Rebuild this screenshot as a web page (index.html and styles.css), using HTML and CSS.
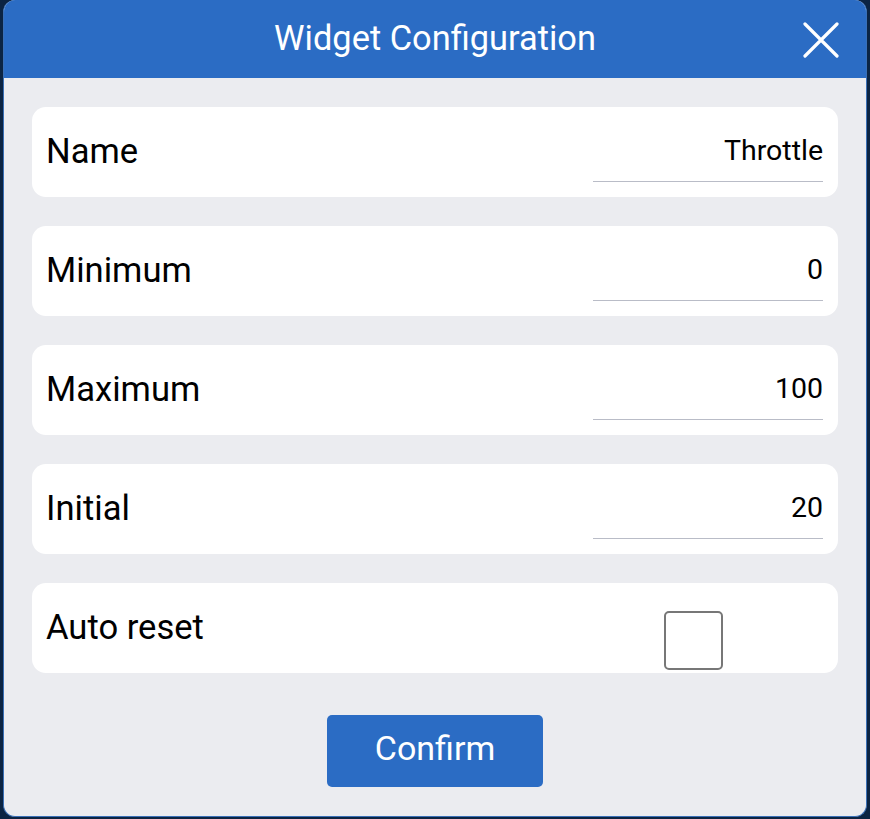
FILE: index.html
```html
<!DOCTYPE html>
<html>
<head>
<meta charset="utf-8">
<link rel="stylesheet" href="styles.css">
</head>
<body>
<div class="dialog">
  <header class="header">
    <span></span>
    <h1 class="title">Widget Configuration</h1>
    <button class="close" aria-label="Close">
      <svg width="36" height="36" viewBox="0 0 36 36"><path d="M2 2 L34 34 M34 2 L2 34" stroke="#fff" stroke-width="3.2" stroke-linecap="round" fill="none"/></svg>
    </button>
  </header>
  <main class="content">
    <div class="card">
      <span class="label">Name</span>
      <div class="field"><span class="value">Throttle</span></div>
    </div>
    <div class="card">
      <span class="label">Minimum</span>
      <div class="field"><span class="value">0</span></div>
    </div>
    <div class="card">
      <span class="label">Maximum</span>
      <div class="field"><span class="value">100</span></div>
    </div>
    <div class="card">
      <span class="label">Initial</span>
      <div class="field"><span class="value">20</span></div>
    </div>
    <div class="card">
      <span class="label">Auto reset</span>
      <div class="check-wrap"><span class="checkbox"></span></div>
    </div>
    <div class="actions">
      <button class="confirm">Confirm</button>
    </div>
  </main>
</div>
</body>
</html>
```

FILE: styles.css
```css
html, body {
  margin: 0;
  padding: 0;
}
body {
  background: #0b2443;
  width: 870px;
  height: 819px;
  overflow: hidden;
  font-family: Roboto, "Liberation Sans", sans-serif;
}
.dialog {
  margin-left: 3px;
  width: 864px;
  height: 817px;
  box-sizing: border-box;
  border: 1px solid #3a6fb5;
  border-top: none;
  border-radius: 12px;
  overflow: hidden;
  background: #ebecf0;
  display: flex;
  flex-direction: column;
}
.header {
  height: 78px;
  flex: none;
  background: #2b6cc4;
  display: grid;
  grid-template-columns: 1fr auto 1fr;
  align-items: center;
}
.title {
  margin: -3px 0 0 0;
  color: #fff;
  font-weight: 400;
  font-size: 34.4px;
  line-height: 40px;
}
.close {
  justify-self: end;
  margin-right: 27px;
  margin-top: 2px;
  background: none;
  border: none;
  padding: 0;
  width: 36px;
  height: 36px;
  display: flex;
}
.content {
  padding: 29px 28px 0 28px;
  display: flex;
  flex-direction: column;
  gap: 29px;
}
.card {
  background: #fff;
  border-radius: 14px;
  height: 90px;
  display: flex;
  align-items: stretch;
  justify-content: space-between;
  padding: 0 15px 0 14px;
}
.card:last-of-type {
  height: 89px;
}
.label {
  align-self: center;
  margin-top: -2px;
  font-size: 34.6px;
  color: #000;
}
.field {
  width: 230px;
  display: flex;
  flex-direction: column;
  justify-content: flex-end;
  padding-bottom: 15px;
}
.value {
  display: block;
  text-align: right;
  font-size: 28.5px;
  line-height: 34px;
  color: #000;
  border-bottom: 1px solid #b9bcc7;
  padding-bottom: 13px;
}
.check-wrap {
  width: 230px;
  display: flex;
  align-items: flex-end;
  padding-bottom: 3px;
}
.checkbox {
  margin-left: 71px;
  width: 59px;
  height: 59px;
  box-sizing: border-box;
  border: 2px solid #777;
  border-radius: 5px;
  background: #fff;
}
.actions {
  display: flex;
  justify-content: center;
  margin-top: 13px;
}
.confirm {
  width: 216px;
  height: 72px;
  background: #2b6cc4;
  color: #fff;
  border: none;
  border-radius: 5px;
  font-family: Roboto, "Liberation Sans", sans-serif;
  font-size: 34px;
  line-height: 40px;
  padding: 0 0 6px 0;
}
```
